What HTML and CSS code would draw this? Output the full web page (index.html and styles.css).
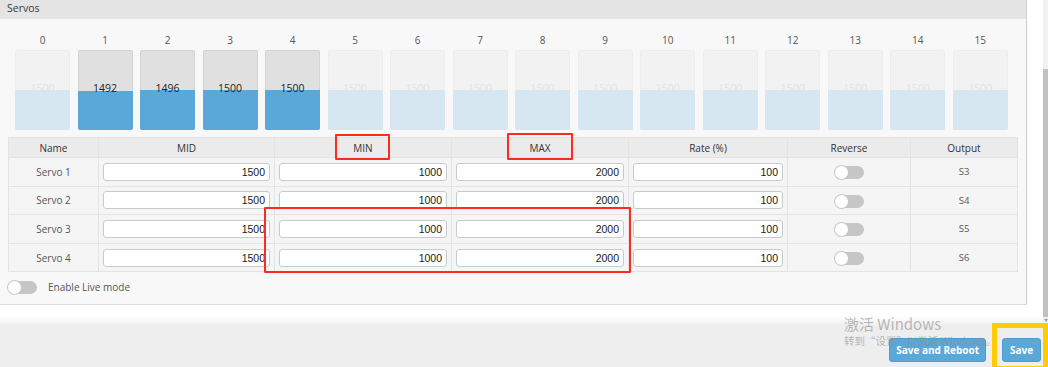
FILE: index.html
```html
<!DOCTYPE html>
<html lang="en">
  <head>
    <meta charset="UTF-8" />
    <title>Servos</title>
    <link rel="stylesheet" href="styles.css">
  </head>
  <body>
    <div class="page">
      <div class="top-area">
        <div class="content">
          <section class="panel">
            <div class="panel-head">Servos</div>
            <div class="panel-body">
              <div class="bars">
                <div class="channel"><span class="ch-num">0</span><div class="meter"><div class="meter-fill" style="height: 50%"></div><span class="meter-val">1500</span></div></div>
                <div class="channel active"><span class="ch-num">1</span><div class="meter"><div class="meter-fill" style="height: 49.2%"></div><span class="meter-val">1492</span></div></div>
                <div class="channel active"><span class="ch-num">2</span><div class="meter"><div class="meter-fill" style="height: 49.6%"></div><span class="meter-val">1496</span></div></div>
                <div class="channel active"><span class="ch-num">3</span><div class="meter"><div class="meter-fill" style="height: 50%"></div><span class="meter-val">1500</span></div></div>
                <div class="channel active"><span class="ch-num">4</span><div class="meter"><div class="meter-fill" style="height: 50%"></div><span class="meter-val">1500</span></div></div>
                <div class="channel"><span class="ch-num">5</span><div class="meter"><div class="meter-fill" style="height: 50%"></div><span class="meter-val">1500</span></div></div>
                <div class="channel"><span class="ch-num">6</span><div class="meter"><div class="meter-fill" style="height: 50%"></div><span class="meter-val">1500</span></div></div>
                <div class="channel"><span class="ch-num">7</span><div class="meter"><div class="meter-fill" style="height: 50%"></div><span class="meter-val">1500</span></div></div>
                <div class="channel"><span class="ch-num">8</span><div class="meter"><div class="meter-fill" style="height: 50%"></div><span class="meter-val">1500</span></div></div>
                <div class="channel"><span class="ch-num">9</span><div class="meter"><div class="meter-fill" style="height: 50%"></div><span class="meter-val">1500</span></div></div>
                <div class="channel"><span class="ch-num">10</span><div class="meter"><div class="meter-fill" style="height: 50%"></div><span class="meter-val">1500</span></div></div>
                <div class="channel"><span class="ch-num">11</span><div class="meter"><div class="meter-fill" style="height: 50%"></div><span class="meter-val">1500</span></div></div>
                <div class="channel"><span class="ch-num">12</span><div class="meter"><div class="meter-fill" style="height: 50%"></div><span class="meter-val">1500</span></div></div>
                <div class="channel"><span class="ch-num">13</span><div class="meter"><div class="meter-fill" style="height: 50%"></div><span class="meter-val">1500</span></div></div>
                <div class="channel"><span class="ch-num">14</span><div class="meter"><div class="meter-fill" style="height: 50%"></div><span class="meter-val">1500</span></div></div>
                <div class="channel"><span class="ch-num">15</span><div class="meter"><div class="meter-fill" style="height: 50%"></div><span class="meter-val">1500</span></div></div>
              </div>

              <table class="servo-table">
                <colgroup>
                  <col class="c-name" />
                  <col class="c-mid" />
                  <col class="c-min" />
                  <col class="c-max" />
                  <col class="c-rate" />
                  <col class="c-rev" />
                  <col class="c-out" />
                </colgroup>
                <thead>
                  <tr>
                    <th>Name</th>
                    <th>MID</th>
                    <th>MIN</th>
                    <th>MAX</th>
                    <th>Rate (%)</th>
                    <th>Reverse</th>
                    <th>Output</th>
                  </tr>
                </thead>
                <tbody>
                  <tr>
                    <td class="name">Servo 1</td>
                    <td><input class="num" type="text" value="1500" /></td>
                    <td><input class="num" type="text" value="1000" /></td>
                    <td><input class="num" type="text" value="2000" /></td>
                    <td><input class="num" type="text" value="100" /></td>
                    <td><span class="toggle"></span></td>
                    <td class="out">S3</td>
                  </tr>
                  <tr>
                    <td class="name">Servo 2</td>
                    <td><input class="num" type="text" value="1500" /></td>
                    <td><input class="num" type="text" value="1000" /></td>
                    <td><input class="num" type="text" value="2000" /></td>
                    <td><input class="num" type="text" value="100" /></td>
                    <td><span class="toggle"></span></td>
                    <td class="out">S4</td>
                  </tr>
                  <tr>
                    <td class="name">Servo 3</td>
                    <td><input class="num" type="text" value="1500" /></td>
                    <td><input class="num" type="text" value="1000" /></td>
                    <td><input class="num" type="text" value="2000" /></td>
                    <td><input class="num" type="text" value="100" /></td>
                    <td><span class="toggle"></span></td>
                    <td class="out">S5</td>
                  </tr>
                  <tr>
                    <td class="name">Servo 4</td>
                    <td><input class="num" type="text" value="1500" /></td>
                    <td><input class="num" type="text" value="1000" /></td>
                    <td><input class="num" type="text" value="2000" /></td>
                    <td><input class="num" type="text" value="100" /></td>
                    <td><span class="toggle"></span></td>
                    <td class="out">S6</td>
                  </tr>
                </tbody>
              </table>

              <div class="live-row">
                <span class="toggle"></span>
                <span class="live-label">Enable Live mode</span>
              </div>
            </div>
          </section>
          <div class="fade"></div>
        </div>
        <div class="scrollbar">
          <div class="thumb"></div>
          <div class="arrow"></div>
        </div>
      </div>

      <div class="toolbar">
        <button class="btn">Save and Reboot</button>
        <button class="btn btn-save">Save</button>
      </div>

      <!-- annotations drawn over the screenshot -->
      <div class="mark mark-min"></div>
      <div class="mark mark-max"></div>
      <div class="mark mark-rows"></div>
      <div class="mark-save"></div>

      <div class="watermark">
        <div class="wm-title">激活 Windows</div>
        <div class="wm-sub">转到“设置”以激活 Windows。</div>
      </div>
    </div>
  </body>
</html>
```

FILE: styles.css
```css
* {
  margin: 0;
  padding: 0;
  box-sizing: border-box;
}

body {
  background: #ffffff;
  font-family: "Open Sans", "Noto Sans", sans-serif;
  color: #333;
  width: 1048px;
  height: 367px;
  overflow: hidden;
}

.page {
  position: relative;
  width: 1048px;
  height: 367px;
}

.top-area {
  display: flex;
  height: 326px;
}

.content {
  width: 1043px;
  display: flex;
  flex-direction: column;
}

.panel {
  width: 1027px;
  height: 305px;
  background: #f8f8f8;
  border-right: 1px solid #cfcfcf;
  border-bottom: 1px solid #dcdcdc;
}

.panel-head {
  height: 19px;
  background: #e4e4e4;
  font-size: 10.5px;
  line-height: 16px;
  padding-left: 7px;
  color: #3a3a3a;
}

.panel-body {
  padding: 15px 9px 0 8px;
}

/* channel meters */
.bars {
  display: grid;
  grid-template-columns: repeat(16, 55px);
  column-gap: 7.53px;
  margin-left: 7px;
}

.channel {
  display: flex;
  flex-direction: column;
  align-items: center;
}

.ch-num {
  font-size: 10px;
  line-height: 12px;
  height: 12px;
  color: #555;
  margin-bottom: 4px;
}

.meter {
  position: relative;
  width: 55px;
  height: 80px;
  background: #f2f2f2;
  border-radius: 2px;
  display: flex;
  flex-direction: column;
  justify-content: flex-end;
  overflow: hidden;
  box-shadow: inset 0 0 0 1px rgba(0, 0, 0, 0.02);
}

.meter-fill {
  background: #d6e7f2;
}

.meter-val {
  position: absolute;
  left: 0;
  right: 0;
  top: 32px;
  text-align: center;
  font-size: 10.5px;
  line-height: 12px;
  color: #e2e2e2;
}

.channel.active .meter {
  background: #e0e0e0;
  box-shadow: inset 0 0 0 1px rgba(0, 0, 0, 0.05);
}

.channel.active .meter-fill {
  background: #5aa7da;
}

.channel.active .meter-val {
  color: #222;
}

/* table */
.servo-table {
  margin-top: 7px;
  width: 1009px;
  border-collapse: collapse;
  table-layout: fixed;
  font-size: 10px;
}

.c-name { width: 90px; }
.c-mid { width: 176px; }
.c-min { width: 177px; }
.c-max { width: 177px; }
.c-rate { width: 159px; }
.c-rev { width: 123px; }
.c-out { width: 107px; }

.servo-table th {
  height: 20px;
  background: #ebebeb;
  font-weight: normal;
  color: #333;
  border: 1px solid #e3e3e3;
}

.servo-table td {
  height: 28.6px;
  background: #f5f5f5;
  border: 1px solid #e3e3e3;
  padding: 0 4px;
  text-align: center;
  color: #555;
}

.servo-table td.out {
  font-size: 9.5px;
}

.num {
  display: block;
  width: 100%;
  height: 18px;
  border: 1px solid #cacaca;
  border-radius: 3px;
  background: #fff;
  text-align: right;
  padding-right: 4px;
  font-family: "Liberation Sans", Arial, sans-serif;
  font-size: 10.5px;
  color: #1a1a1a;
}

.toggle {
  display: inline-block;
  position: relative;
  width: 29px;
  height: 13px;
  border-radius: 7px;
  background: #c6c6c6;
  vertical-align: middle;
}

.toggle::before {
  content: "";
  position: absolute;
  left: 0;
  top: 0;
  width: 13px;
  height: 13px;
  border-radius: 50%;
  background: #fff;
  box-shadow: 0 0 0 1px #c9c9c9;
}

.live-row {
  display: flex;
  align-items: center;
  gap: 11px;
  margin-top: 8px;
}

.live-label {
  font-size: 10px;
  color: #555;
}

.fade {
  flex: 1;
  background: linear-gradient(#ffffff 55%, #eeeeee);
}

.scrollbar {
  width: 5px;
  background: #f1f1f1;
}

.thumb {
  margin-top: 69px;
  height: 248px;
  background: #c1c1c1;
}

.arrow {
  margin: 2px auto 0;
  width: 0;
  height: 0;
  border-left: 2px solid transparent;
  border-right: 2px solid transparent;
  border-top: 3px solid #9a9a9a;
}

/* footer */
.toolbar {
  height: 41px;
  background: #eeeeee;
  display: flex;
  justify-content: flex-end;
  align-items: flex-start;
  gap: 16px;
  padding: 12px 7px 0 0;
}

.btn {
  height: 24px;
  padding: 0 6px;
  background: #5aa7da;
  border: 1px solid #4e9ccf;
  border-radius: 3px;
  color: #fff;
  font-family: "Open Sans", sans-serif;
  font-weight: bold;
  font-size: 10px;
}

.btn-save {
  width: 39px;
  padding: 0;
}

/* red highlight boxes and yellow frame */
.mark {
  position: absolute;
  border: 2px solid #ff2a22;
  border-radius: 1px;
}

.mark-min {
  left: 335px;
  top: 134px;
  width: 55px;
  height: 26px;
}

.mark-max {
  left: 507px;
  top: 133px;
  width: 66px;
  height: 27px;
}

.mark-rows {
  left: 264px;
  top: 207px;
  width: 367px;
  height: 66px;
}

.mark-save {
  position: absolute;
  left: 992px;
  top: 323px;
  width: 56px;
  height: 48px;
  border: 5px solid #ffcc00;
}

.watermark {
  position: absolute;
  left: 844px;
  top: 314px;
  color: rgba(140, 140, 140, 0.6);
  font-family: "Noto Sans CJK SC", "Noto Sans", sans-serif;
}

.wm-title {
  font-size: 15px;
  line-height: 20px;
}

.wm-sub {
  font-size: 10.5px;
  line-height: 14px;
}
```
